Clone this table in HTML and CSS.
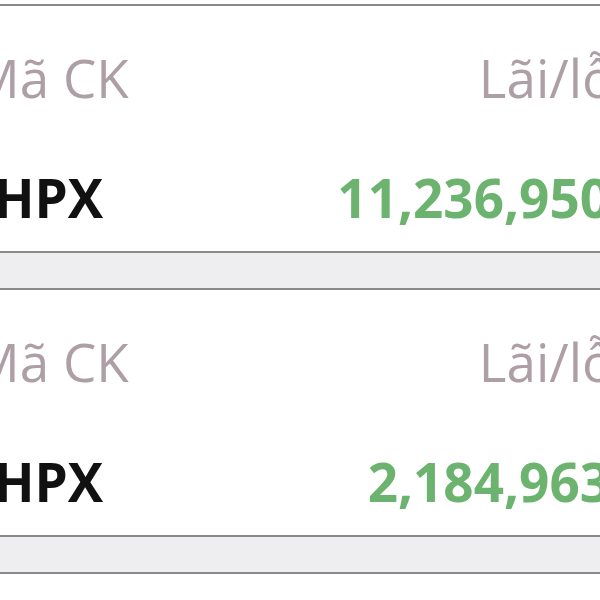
FILE: index.html
```html
<!DOCTYPE html>
<html lang="vi">
<head>
<meta charset="utf-8">
<link rel="stylesheet" href="styles.css">
</head>
<body>
<div class="list">
  <div class="card">
    <div class="row">
      <span class="label">Mã CK</span>
      <span class="label">Lãi/lỗ</span>
    </div>
    <div class="row">
      <span class="symbol">HPX</span>
      <span class="profit">11,236,950</span>
    </div>
  </div>
  <div class="gap"></div>
  <div class="card">
    <div class="row">
      <span class="label">Mã CK</span>
      <span class="label">Lãi/lỗ</span>
    </div>
    <div class="row">
      <span class="symbol">HPX</span>
      <span class="profit">2,184,963</span>
    </div>
  </div>
  <div class="gap"></div>
  <div class="card card-next"></div>
</div>
</body>
</html>
```
FILE: styles.css
```css
html, body {
  margin: 0;
  padding: 0;
  background: #fff;
  overflow: hidden;
  width: 600px;
  height: 600px;
}
.list {
  margin-top: 4px;
  font-family: "Open Sans", "Noto Sans", sans-serif;
}
.card {
  background: #fff;
  border-top: 2px solid #8a8a8a;
  border-bottom: 2px solid #8a8a8a;
  padding-top: 36px;
  box-sizing: border-box;
  height: 249px;
  display: flex;
  flex-direction: column;
  gap: 48px;
  margin-left: -6px;
  margin-right: -10px;
}
.card-next {
  border-bottom: none;
  height: 40px;
}
.gap {
  height: 35px;
  background: #eeeef0;
}
.row {
  display: flex;
  justify-content: space-between;
  align-items: baseline;
  height: 72px;
  line-height: 72px;
  font-size: 53px;
}
.label {
  color: #ae9fa6;
  font-weight: 400;
}
.row .label:first-child {
  margin-left: -22px;
}
.row .label:last-child {
  margin-right: -4px;
}
.symbol {
  color: #111;
  font-weight: 700;
}
.profit {
  color: #6cb36f;
  font-weight: 700;
}
```
